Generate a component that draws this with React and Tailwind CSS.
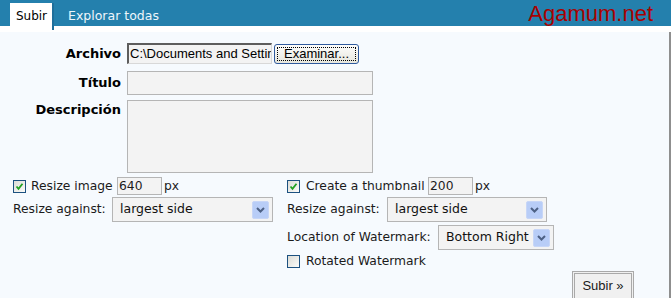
import React from 'react'

const dejavu = { fontFamily: '"DejaVu Sans", Verdana, sans-serif' }
const arial = { fontFamily: '"Liberation Sans", Arial, sans-serif' }

function Check({ checked }) {
  return (
    <span className="inline-flex h-[13px] w-[13px] shrink-0 items-center justify-center border border-[#1c5180] bg-gradient-to-br from-[#dcdcd6] to-[#fbfbf9]">
      {checked && (
        <svg width="9" height="9" viewBox="0 0 9 9">
          <path d="M1.5 4.5 L3.5 6.8 L7.5 1.8" fill="none" stroke="#21a121" strokeWidth="1.8" />
        </svg>
      )}
    </span>
  )
}

function Select({ value, width }) {
  return (
    <div className={`flex h-[25px] shrink-0 items-center justify-between border border-[#b5b5b5] bg-[#f3f3f3] pl-[7px] pr-[3px] text-[12.5px] text-[#111] ${width}`}>
      <span className="whitespace-nowrap">{value}</span>
      <span className="flex h-[18px] w-[17px] items-center justify-center rounded-[2px] border border-[#c7d6f7] bg-[#b8cdf7]">
        <svg width="9" height="6" viewBox="0 0 9 6">
          <path d="M1 1 L4.5 4.5 L8 1" fill="none" stroke="#4d6185" strokeWidth="2" />
        </svg>
      </span>
    </div>
  )
}

export default function App() {
  return (
    <div className="h-[298px] w-[671px] overflow-hidden bg-[#f6fafe] text-[12.3px] text-[#1b1b1b]" style={dejavu}>
      <div className="flex h-[26px] items-start bg-[#2480ad]">
        <div className="ml-[10px] mt-[3px] flex h-[27px] w-[44px] items-start justify-center border-r-2 border-[#1f6f9b] bg-white pt-[4px] pl-[1px] text-[12px] text-black">
          Subir
        </div>
        <div className="ml-[14px] pt-[7px] text-[12.5px] text-[#eef6fb]">Explorar todas</div>
        <div className="ml-auto mr-[18px] pt-[1px] text-[22px] leading-[26px] text-[#a80000]" style={arial}>
          Agamum.net
        </div>
      </div>
      <div className="h-[6px] bg-white" />
      <div className="flex h-[266px] flex-col border-r-2 border-[#8f8f8f]">
        <div className="mt-[11px] flex items-start">
          <div className="w-[121px] pt-[1px] text-right text-[13px] font-bold text-black">Archivo</div>
          <div className="ml-[6px] flex items-center">
            <div className="flex h-[21px] w-[145px] items-center overflow-hidden whitespace-nowrap border-t-2 border-l-2 border-r border-b border-t-[#5d5d5d] border-l-[#5d5d5d] border-r-[#d8d8d8] border-b-[#d8d8d8] bg-[#f3f3f3] pl-[1px] text-[13px] text-black" style={arial}>
              C:\Documents and Settings
            </div>
            <div className="ml-[2px] flex h-[20px] w-[85px] items-center justify-center rounded-[3px] border border-[#2f5a9e] bg-gradient-to-b from-[#fdfdfc] to-[#e6e6dd] p-[2px]">
              <div className="flex h-full w-full items-center justify-center border border-dotted border-black text-[13px] text-black" style={arial}>
                Examinar...
              </div>
            </div>
          </div>
        </div>
        <div className="mt-[7px] flex items-center">
          <div className="w-[121px] text-right text-[13px] font-bold text-black">Título</div>
          <div className="ml-[6px] h-[24px] w-[246px] border border-[#b5b5b5] bg-[#f3f3f3]" />
        </div>
        <div className="mt-[5px] flex items-start">
          <div className="w-[121px] text-right text-[13px] font-bold text-black">Descripción</div>
          <div className="ml-[6px] h-[73px] w-[246px] border border-[#b5b5b5] bg-[#f3f3f3]" />
        </div>
        <div className="mt-[4px] grid grid-cols-[274px_1fr] pl-[13px]">
          <div className="flex flex-col">
            <div className="flex h-[18px] items-center whitespace-nowrap">
              <Check checked />
              <span className="ml-[5px] w-[81px] shrink-0">Resize image</span>
              <span className="ml-[5px] flex h-[18px] w-[45px] shrink-0 items-center border border-[#b5b5b5] bg-[#f3f3f3] pl-[1px]">640</span>
              <span className="ml-[2px]">px</span>
            </div>
            <div className="mt-[2px] flex items-center whitespace-nowrap">
              <span className="w-[99px] shrink-0">Resize against:</span>
              <Select value="largest side" width="w-[161px]" />
            </div>
          </div>
          <div className="flex flex-col">
            <div className="flex h-[18px] items-center whitespace-nowrap">
              <Check checked />
              <span className="ml-[6px] w-[119px] shrink-0">Create a thumbnail</span>
              <span className="ml-[3px] flex h-[18px] w-[45px] shrink-0 items-center border border-[#b5b5b5] bg-[#f3f3f3] pl-[1px]">200</span>
              <span className="ml-[2px]">px</span>
            </div>
            <div className="mt-[2px] flex items-center whitespace-nowrap">
              <span className="w-[100px] shrink-0">Resize against:</span>
              <Select value="largest side" width="w-[160px]" />
            </div>
            <div className="mt-[3px] flex items-center whitespace-nowrap">
              <span className="w-[151px] shrink-0">Location of Watermark:</span>
              <Select value="Bottom Right" width="w-[116px]" />
            </div>
            <div className="mt-[4px] flex h-[14px] items-center whitespace-nowrap">
              <Check />
              <span className="ml-[6px]">Rotated Watermark</span>
            </div>
            <div className="mt-[3px] flex justify-end pr-[35px]">
              <div className="flex h-[30px] w-[62px] items-center justify-center border-[3px] border-double border-[#a9a9a9] bg-[#f0f0f0] text-[13px] text-[#1a1a1a]" style={arial}>
                Subir »
              </div>
            </div>
          </div>
        </div>
      </div>
    </div>
  )
}
